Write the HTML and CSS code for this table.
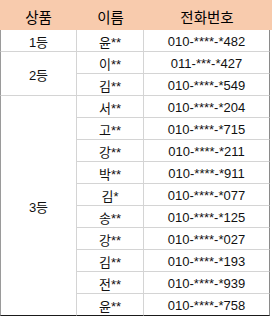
FILE: index.html
```html
<!DOCTYPE html>
<html lang="ko">
<head>
<meta charset="utf-8">
<link rel="stylesheet" href="styles.css">
</head>
<body>
<div class="sheet">
  <div class="hd">상품</div>
  <div class="hd">이름</div>
  <div class="hd">전화번호</div>
  <div class="hd hd-pad"></div>

  <div class="rank r1">1등</div>
  <div class="name">윤**</div>
  <div class="phone">010-****-*482</div>

  <div class="rank r2">2등</div>
  <div class="name">이**</div>
  <div class="phone">011-***-*427</div>
  <div class="name">김**</div>
  <div class="phone">010-****-*549</div>

  <div class="rank r3 last">3등</div>
  <div class="name">서**</div>
  <div class="phone">010-****-*204</div>
  <div class="name">고**</div>
  <div class="phone">010-****-*715</div>
  <div class="name">강**</div>
  <div class="phone">010-****-*211</div>
  <div class="name">박**</div>
  <div class="phone">010-****-*911</div>
  <div class="name">김*</div>
  <div class="phone">010-****-*077</div>
  <div class="name">송**</div>
  <div class="phone">010-****-*125</div>
  <div class="name">강**</div>
  <div class="phone">010-****-*027</div>
  <div class="name">김**</div>
  <div class="phone">010-****-*193</div>
  <div class="name">전**</div>
  <div class="phone">010-****-*939</div>
  <div class="name last">윤**</div>
  <div class="phone last">010-****-*758</div>
</div>
</body>
</html>
```
FILE: styles.css
```css
* { box-sizing: border-box; }
html, body { margin: 0; padding: 0; background: #fff; }
.sheet {
  display: grid;
  grid-template-columns: 77px 67px 126px 2px;
  grid-template-rows: 30px repeat(13, 22px);
  width: 272px;
  font-family: "Liberation Sans", "Noto Sans CJK KR", sans-serif;
  font-size: 13px;
  color: #111;
}
.hd {
  background: #f8cbad;
  display: flex;
  align-items: center;
  justify-content: center;
  padding-top: 3px;
  font-family: "Noto Sans CJK KR", sans-serif;
  font-size: 14.5px;
  color: #000;
}
.rank, .name, .phone {
  display: flex;
  align-items: center;
  justify-content: center;
  padding-top: 1px;
  border-bottom: 1px solid #d4d4d4;
  border-right: 1px solid #d4d4d4;
}
.rank { grid-column: 1; border-left: 1px solid #9a9a9a; }
.name { grid-column: 2; }
.phone { grid-column: 3; border-right-color: #8a8a8a; }
.r1 { grid-row: span 1; }
.r2 { grid-row: span 2; }
.r3 { grid-row: span 10; }
.last { border-bottom-color: #1a1a1a; }
```
